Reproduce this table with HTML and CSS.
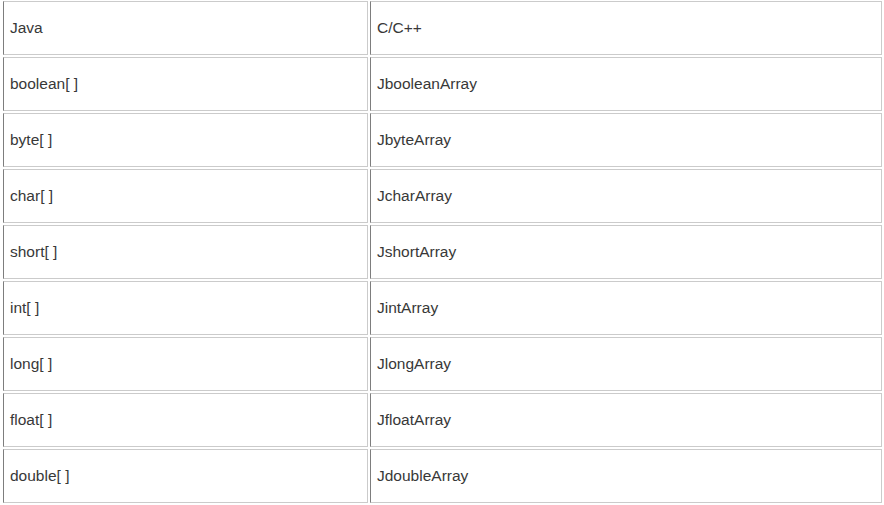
FILE: index.html
```html
<!DOCTYPE html>
<html>
<head>
<meta charset="utf-8">
<link rel="stylesheet" href="styles.css">
</head>
<body>
<table class="types">
  <tr><td class="c1">Java</td><td class="c2">C/C++</td></tr>
  <tr><td class="c1">boolean[ ]</td><td class="c2">JbooleanArray</td></tr>
  <tr><td class="c1">byte[ ]</td><td class="c2">JbyteArray</td></tr>
  <tr><td class="c1">char[ ]</td><td class="c2">JcharArray</td></tr>
  <tr><td class="c1">short[ ]</td><td class="c2">JshortArray</td></tr>
  <tr><td class="c1">int[ ]</td><td class="c2">JintArray</td></tr>
  <tr><td class="c1">long[ ]</td><td class="c2">JlongArray</td></tr>
  <tr><td class="c1">float[ ]</td><td class="c2">JfloatArray</td></tr>
  <tr><td class="c1">double[ ]</td><td class="c2">JdoubleArray</td></tr>
</table>
</body>
</html>
```
FILE: styles.css
```css
html, body {
  margin: 0;
  padding: 0;
  background: #ffffff;
}
.types {
  border-collapse: separate;
  border-spacing: 2px;
  table-layout: fixed;
  width: 883px;
  margin: -1px 0 0 1px;
  font-family: "Liberation Sans", Arial, sans-serif;
  font-size: 15.5px;
  color: #383838;
}
.types td {
  box-sizing: border-box;
  height: 54px;
  padding: 17px 6px 18px 6px;
  line-height: 17px;
  vertical-align: top;
  border: 1px solid #cbcbcb;
  border-left-color: #7d7d7d;
  white-space: nowrap;
}
.types .c1 { width: 365px; }
.types .c2 { width: 512px; }
```
